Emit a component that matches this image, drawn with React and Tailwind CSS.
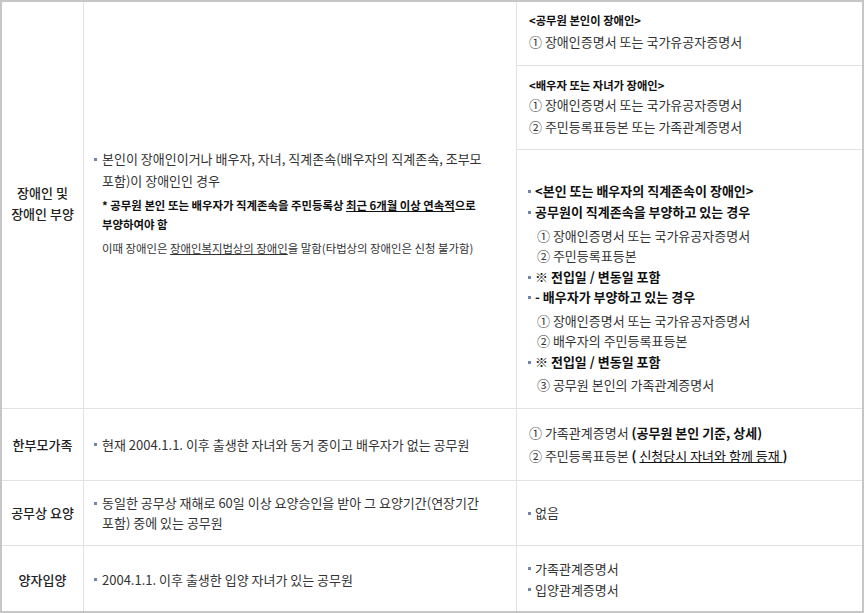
import React from "react";

const Dot = () => (
  <span className="w-[7px] shrink-0">
    <span className="block w-[3px] h-[3px] bg-[#7486a8]" />
  </span>
);

export default function App() {
  return (
    <div className="w-[864px] h-[613px] border-2 border-[#c6c6c6] flex flex-col bg-white text-[#333] text-[13px] font-['Noto_Sans_CJK_KR','Liberation_Sans',sans-serif]">
      {/* Row 1 */}
      <div className="h-[407px] flex border-b border-[#e2e2e2]">
        <div className="w-[82px] border-r border-[#e2e2e2] flex flex-col items-center justify-center pb-[4px] leading-[21px] font-medium text-[#222]">
          <div>장애인 및</div>
          <div>장애인 부양</div>
        </div>
        <div className="w-[433px] border-r border-[#e2e2e2] flex flex-col justify-center pl-[10px] pb-[4px]">
          <div className="flex leading-[22px]">
            <span className="w-[8px] shrink-0 h-[22px] flex items-center"><span className="w-[3px] h-[3px] bg-[#7486a8]" /></span>
            <div>
              본인이 장애인이거나 배우자, 자녀, 직계존속(배우자의 직계존속, 조부모
              <br />
              포함)이 장애인인 경우
            </div>
          </div>
          <div className="pl-[8px] mt-[4px] leading-[19px] text-[11.4px] font-bold text-[#111]">
            * 공무원 본인 또는 배우자가 직계존속을 주민등록상 <span className="underline">최근 6개월 이상 연속적</span>으로
            <br />
            부양하여야 함
          </div>
          <div className="pl-[8px] mt-[4px] leading-[20px] text-[11.4px] text-[#333]">
            이때 장애인은 <span className="underline">장애인복지법상의 장애인</span>을 말함(타법상의 장애인은 신청 불가함)
          </div>
        </div>
        <div className="flex-1 flex flex-col">
          <div className="h-[64px] border-b border-[#e2e2e2] pl-[12px] pt-[8px]">
            <div className="leading-[20px] text-[11.3px] font-bold text-[#111]">&lt;공무원 본인이 장애인&gt;</div>
            <div className="leading-[20px] mt-[2px]">① 장애인증명서 또는 국가유공자증명서</div>
          </div>
          <div className="h-[84px] border-b border-[#e2e2e2] pl-[12px] pt-[9px]">
            <div className="leading-[20px] text-[11.3px] font-bold text-[#111]">&lt;배우자 또는 자녀가 장애인&gt;</div>
            <div className="leading-[20px]">① 장애인증명서 또는 국가유공자증명서</div>
            <div className="leading-[20px] mt-[2px]">② 주민등록표등본 또는 가족관계증명서</div>
          </div>
          <div className="flex-1 pl-[11px] pt-[31px] leading-[20px]">
            <div className="flex items-center font-bold text-[#111]"><Dot />&lt;본인 또는 배우자의 직계존속이 장애인&gt;</div>
            <div className="flex items-center font-bold text-[#111] mt-[1px]"><Dot />공무원이 직계존속을 부양하고 있는 경우</div>
            <div className="pl-[9px] mt-[4px]">① 장애인증명서 또는 국가유공자증명서</div>
            <div className="pl-[9px]">② 주민등록표등본</div>
            <div className="flex items-center font-bold text-[#111] mt-[1px]"><Dot />※ 전입일 / 변동일 포함</div>
            <div className="flex items-center font-bold text-[#111]"><Dot />- 배우자가 부양하고 있는 경우</div>
            <div className="pl-[9px] mt-[4px]">① 장애인증명서 또는 국가유공자증명서</div>
            <div className="pl-[9px]">② 배우자의 주민등록표등본</div>
            <div className="flex items-center font-bold text-[#111] mt-[1px]"><Dot />※ 전입일 / 변동일 포함</div>
            <div className="pl-[9px] mt-[3px]">③ 공무원 본인의 가족관계증명서</div>
          </div>
        </div>
      </div>

      {/* Row 2 */}
      <div className="h-[72px] flex border-b border-[#e2e2e2]">
        <div className="w-[82px] border-r border-[#e2e2e2] flex items-center justify-center font-medium text-[#222]">한부모가족</div>
        <div className="w-[433px] border-r border-[#e2e2e2] flex items-center pl-[10px]">
          <span className="w-[8px] shrink-0"><span className="block w-[3px] h-[3px] bg-[#7486a8]" /></span>
          현재 2004.1.1. 이후 출생한 자녀와 동거 중이고 배우자가 없는 공무원
        </div>
        <div className="flex-1 flex flex-col justify-center pl-[12px] leading-[22px]">
          <div>① 가족관계증명서 <span className="font-bold text-[#111]">(공무원 본인 기준, 상세)</span></div>
          <div className="mt-[1px]">② 주민등록표등본 <span className="font-bold text-[#111]">(</span> <span className="underline text-[#111]">신청당시 자녀와 함께 등재 </span><span className="font-bold text-[#111]">)</span></div>
        </div>
      </div>

      {/* Row 3 */}
      <div className="h-[65px] flex border-b border-[#e2e2e2]">
        <div className="w-[82px] border-r border-[#e2e2e2] flex items-center justify-center font-medium text-[#222]">공무상 요양</div>
        <div className="w-[433px] border-r border-[#e2e2e2] flex items-center pl-[10px] leading-[20px]">
          <div className="flex">
            <span className="w-[8px] shrink-0 h-[20px] flex items-center"><span className="block w-[3px] h-[3px] bg-[#7486a8]" /></span>
            <div>
              동일한 공무상 재해로 60일 이상 요양승인을 받아 그 요양기간(연장기간
              <br />
              포함) 중에 있는 공무원
            </div>
          </div>
        </div>
        <div className="flex-1 flex items-center pl-[11px]">
          <Dot />
          없음
        </div>
      </div>

      {/* Row 4 */}
      <div className="flex-1 flex">
        <div className="w-[82px] border-r border-[#e2e2e2] flex items-center justify-center font-medium text-[#222] pt-[2px]">양자입양</div>
        <div className="w-[433px] border-r border-[#e2e2e2] flex items-center pl-[10px] pt-[2px]">
          <span className="w-[8px] shrink-0"><span className="block w-[3px] h-[3px] bg-[#7486a8]" /></span>
          2004.1.1. 이후 출생한 입양 자녀가 있는 공무원
        </div>
        <div className="flex-1 flex flex-col justify-center pl-[11px] leading-[21px]">
          <div className="flex items-center"><Dot />가족관계증명서</div>
          <div className="flex items-center"><Dot />입양관계증명서</div>
        </div>
      </div>
    </div>
  );
}
